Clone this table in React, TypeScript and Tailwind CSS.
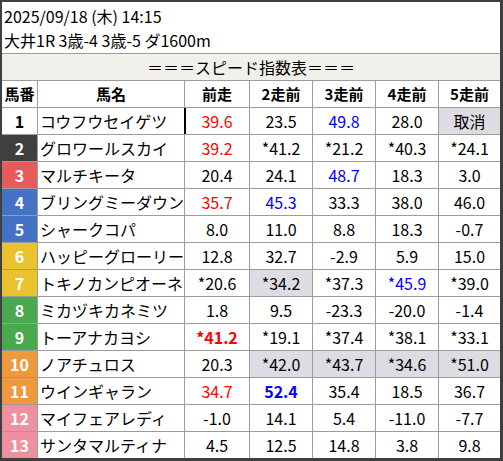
import React from "react";

type Cell = { v: string; c?: "r" | "b" | "R" | "B"; g?: boolean };
type Row = { n: number; name: string; cells: Cell[] };

const rows: Row[] = [
  { n: 1, name: "コウフウセイゲツ", cells: [{ v: "39.6", c: "r" }, { v: "23.5" }, { v: "49.8", c: "b" }, { v: "28.0" }, { v: "取消", g: true }] },
  { n: 2, name: "グロワールスカイ", cells: [{ v: "39.2", c: "r" }, { v: "*41.2" }, { v: "*21.2" }, { v: "*40.3" }, { v: "*24.1" }] },
  { n: 3, name: "マルチキータ", cells: [{ v: "20.4" }, { v: "24.1" }, { v: "48.7", c: "b" }, { v: "18.3" }, { v: "3.0" }] },
  { n: 4, name: "ブリングミーダウン", cells: [{ v: "35.7", c: "r" }, { v: "45.3", c: "b" }, { v: "33.3" }, { v: "38.0" }, { v: "46.0" }] },
  { n: 5, name: "シャークコパ", cells: [{ v: "8.0" }, { v: "11.0" }, { v: "8.8" }, { v: "18.3" }, { v: "-0.7" }] },
  { n: 6, name: "ハッピーグローリー", cells: [{ v: "12.8" }, { v: "32.7" }, { v: "-2.9" }, { v: "5.9" }, { v: "15.0" }] },
  { n: 7, name: "トキノカンピオーネ", cells: [{ v: "*20.6" }, { v: "*34.2", g: true }, { v: "*37.3" }, { v: "*45.9", c: "b" }, { v: "*39.0" }] },
  { n: 8, name: "ミカヅキカネミツ", cells: [{ v: "1.8" }, { v: "9.5" }, { v: "-23.3" }, { v: "-20.0" }, { v: "-1.4" }] },
  { n: 9, name: "トーアナカヨシ", cells: [{ v: "*41.2", c: "R" }, { v: "*19.1" }, { v: "*37.4" }, { v: "*38.1" }, { v: "*33.1" }] },
  { n: 10, name: "ノアチュロス", cells: [{ v: "20.3" }, { v: "*42.0", g: true }, { v: "*43.7", g: true }, { v: "*34.6", g: true }, { v: "*51.0", g: true }] },
  { n: 11, name: "ウインギャラン", cells: [{ v: "34.7", c: "r" }, { v: "52.4", c: "B" }, { v: "35.4" }, { v: "18.5" }, { v: "36.7" }] },
  { n: 12, name: "マイフェアレディ", cells: [{ v: "-1.0" }, { v: "14.1" }, { v: "5.4" }, { v: "-11.0" }, { v: "-7.7" }] },
  { n: 13, name: "サンタマルティナ", cells: [{ v: "4.5" }, { v: "12.5" }, { v: "14.8" }, { v: "3.8" }, { v: "9.8" }] },
];

const numCls: Record<number, string> = {
  1: "bg-white text-black",
  2: "bg-[#3f3f3f] text-white",
  3: "bg-[#e65a5a] text-white",
  4: "bg-[#4472c4] text-white",
  5: "bg-[#4472c4] text-white",
  6: "bg-[#e9c22e] text-white",
  7: "bg-[#e9c22e] text-white",
  8: "bg-[#4aa84e] text-white",
  9: "bg-[#4aa84e] text-white",
  10: "bg-[#f0983c] text-white",
  11: "bg-[#f0983c] text-white",
  12: "bg-[#f08fa0] text-white",
  13: "bg-[#f08fa0] text-white",
};

const colorCls = (c?: string) =>
  c === "r"
    ? "text-[#ff0000]"
    : c === "b"
    ? "text-[#0000ff]"
    : c === "R"
    ? "text-[#ff0000] font-bold"
    : c === "B"
    ? "text-[#0000ff] font-bold"
    : "text-black";

export default function App() {
  return (
    <div
      className="w-[503px] h-[461px] bg-white border-t-2 border-l-2 border-r-[3px] border-b-[3px] border-[#3f3f3f] flex flex-col overflow-hidden"
      style={{ fontFamily: '"Noto Sans CJK JP", "Noto Sans", sans-serif' }}
    >
      <div className="h-[51px] pl-[2px] pt-[2px] flex flex-col text-[16px] leading-[24px] text-black">
        <div>2025/09/18 (木) 14:15</div>
        <div>大井1R 3歳-4 3歳-5 ダ1600m</div>
      </div>
      <div className="grid grid-cols-[35px_146px_64px_62px_62px_62px_61px] auto-rows-[26px] gap-px bg-[#9c9c9c] border-t border-[#9c9c9c]">
        <div className="col-span-7 bg-[#f2f0eb] flex items-center justify-center text-[16px] text-black">
          ＝＝＝スピード指数表＝＝＝
        </div>
        {["馬番", "馬名", "前走", "2走前", "3走前", "4走前", "5走前"].map((h) => (
          <div key={h} className="bg-white flex items-center justify-center font-bold text-[15px] text-black">
            {h}
          </div>
        ))}
        {rows.map((r) => (
          <React.Fragment key={r.n}>
            <div className={`${numCls[r.n]} flex items-center justify-center font-bold text-[16px]`}>{r.n}</div>
            <div className="bg-white flex items-center pl-[2px] text-[16px] text-black whitespace-nowrap overflow-hidden">
              {r.name}
            </div>
            {r.cells.map((c, i) => (
              <div
                key={i}
                className={`relative ${c.g ? "bg-[#dcdce2]" : "bg-white"} ${colorCls(c.c)} flex items-center justify-center text-[16px]`}
              >
                {r.n === 1 && i === 0 && <div className="absolute -left-px top-0 bottom-0 w-[2px] bg-black" />}
                {c.v}
              </div>
            ))}
          </React.Fragment>
        ))}
      </div>
    </div>
  );
}
